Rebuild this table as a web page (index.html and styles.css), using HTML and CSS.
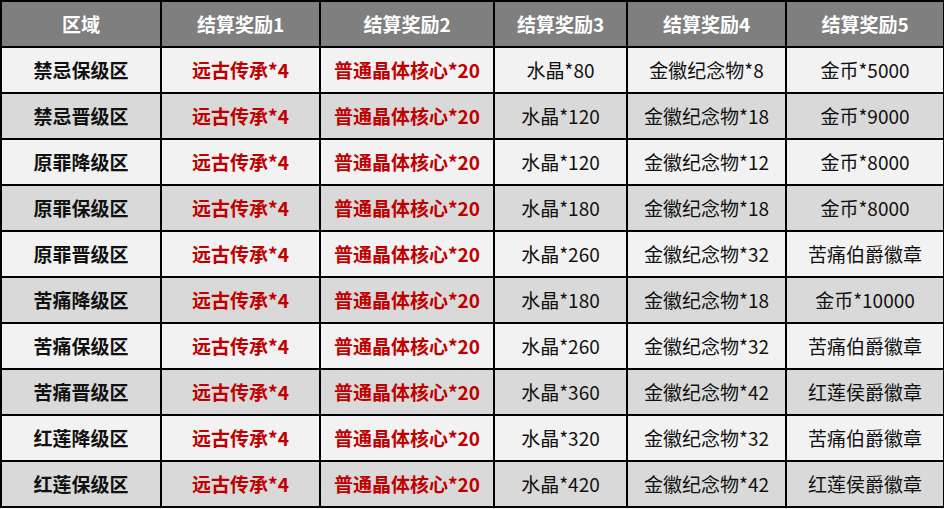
FILE: index.html
```html
<!DOCTYPE html>
<html lang="zh-CN">
<head>
<meta charset="utf-8">
<link rel="stylesheet" href="styles.css">
</head>
<body>
<table class="rewards">
<colgroup>
<col class="c1"><col class="c2"><col class="c3"><col class="c4"><col class="c5"><col class="c6">
</colgroup>
<thead>
<tr><th>区域</th><th>结算奖励1</th><th>结算奖励2</th><th>结算奖励3</th><th>结算奖励4</th><th>结算奖励5</th></tr>
</thead>
<tbody>
<tr><td class="zone">禁忌保级区</td><td class="red">远古传承*4</td><td class="red">普通晶体核心*20</td><td>水晶*80</td><td>金徽纪念物*8</td><td>金币*5000</td></tr>
<tr><td class="zone">禁忌晋级区</td><td class="red">远古传承*4</td><td class="red">普通晶体核心*20</td><td>水晶*120</td><td>金徽纪念物*18</td><td>金币*9000</td></tr>
<tr><td class="zone">原罪降级区</td><td class="red">远古传承*4</td><td class="red">普通晶体核心*20</td><td>水晶*120</td><td>金徽纪念物*12</td><td>金币*8000</td></tr>
<tr><td class="zone">原罪保级区</td><td class="red">远古传承*4</td><td class="red">普通晶体核心*20</td><td>水晶*180</td><td>金徽纪念物*18</td><td>金币*8000</td></tr>
<tr><td class="zone">原罪晋级区</td><td class="red">远古传承*4</td><td class="red">普通晶体核心*20</td><td>水晶*260</td><td>金徽纪念物*32</td><td>苦痛伯爵徽章</td></tr>
<tr><td class="zone">苦痛降级区</td><td class="red">远古传承*4</td><td class="red">普通晶体核心*20</td><td>水晶*180</td><td>金徽纪念物*18</td><td>金币*10000</td></tr>
<tr><td class="zone">苦痛保级区</td><td class="red">远古传承*4</td><td class="red">普通晶体核心*20</td><td>水晶*260</td><td>金徽纪念物*32</td><td>苦痛伯爵徽章</td></tr>
<tr><td class="zone">苦痛晋级区</td><td class="red">远古传承*4</td><td class="red">普通晶体核心*20</td><td>水晶*360</td><td>金徽纪念物*42</td><td>红莲侯爵徽章</td></tr>
<tr><td class="zone">红莲降级区</td><td class="red">远古传承*4</td><td class="red">普通晶体核心*20</td><td>水晶*320</td><td>金徽纪念物*32</td><td>苦痛伯爵徽章</td></tr>
<tr><td class="zone">红莲保级区</td><td class="red">远古传承*4</td><td class="red">普通晶体核心*20</td><td>水晶*420</td><td>金徽纪念物*42</td><td>红莲侯爵徽章</td></tr>
</tbody>
</table>
</body>
</html>
```

FILE: styles.css
```css
html, body {
  margin: 0;
  padding: 0;
  background: #ffffff;
}
.rewards {
  border-collapse: collapse;
  table-layout: fixed;
  width: 943px;
  font-family: "Noto Sans CJK SC", "Noto Sans", sans-serif;
  font-size: 19px;
  color: #111111;
}
.c1 { width: 160px; }
.c2 { width: 159px; }
.c3 { width: 174px; }
.c4 { width: 133px; }
.c5 { width: 159px; }
.c6 { width: 158px; }
.rewards th,
.rewards td {
  border: 2px solid #000000;
  height: 42px;
  padding: 0 0 2px 0;
  text-align: center;
  vertical-align: middle;
  line-height: 1;
  white-space: nowrap;
}
.rewards th {
  background: #7f7f7f;
  color: #ffffff;
  font-weight: 700;
}
.rewards tbody tr:nth-child(odd) td { background: #f2f2f2; }
.rewards tbody tr:nth-child(even) td { background: #d9d9d9; }
.rewards td.zone { font-weight: 700; color: #111111; }
.rewards td.red { font-weight: 700; color: #c00000; }
```
